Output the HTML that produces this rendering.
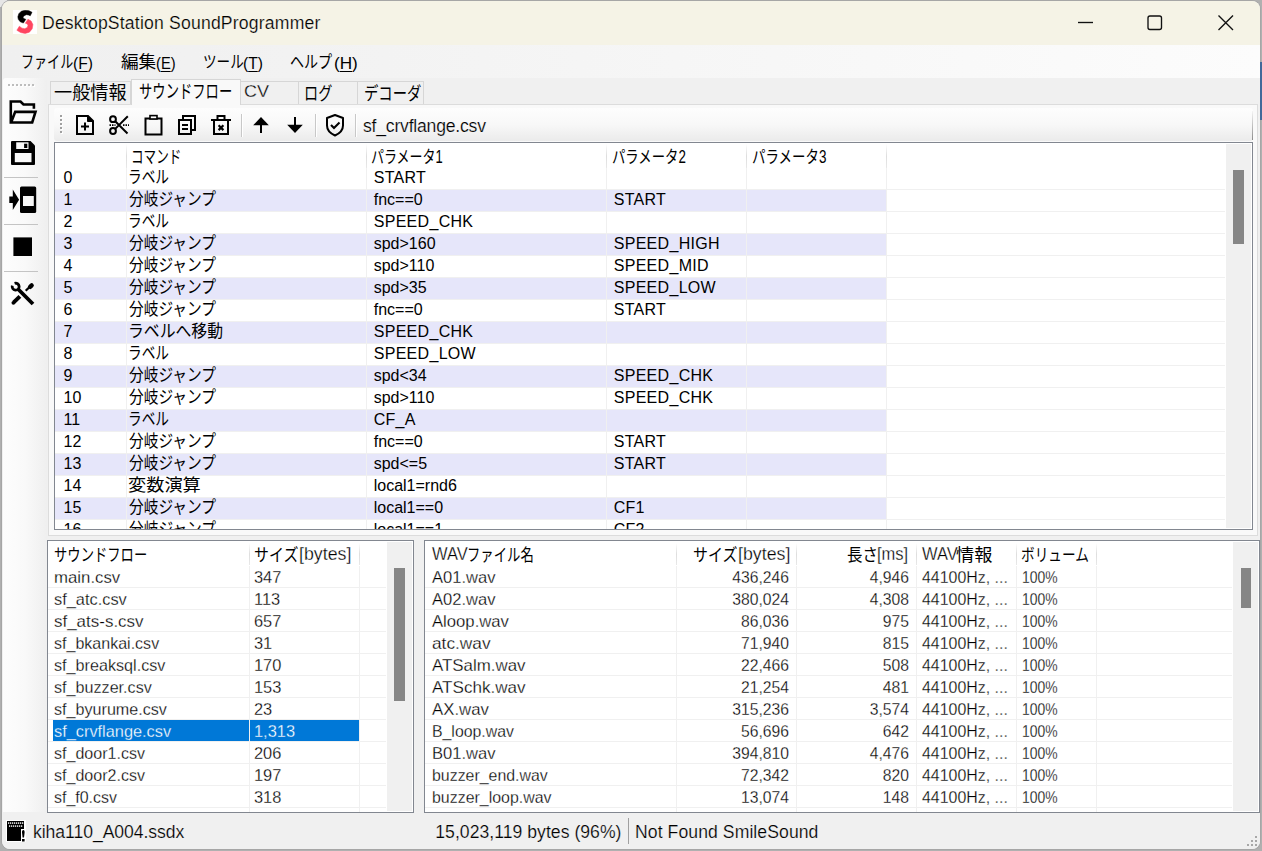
<!DOCTYPE html><html lang="ja"><head><meta charset="utf-8"><title>DesktopStation SoundProgrammer</title><style>
html,body{margin:0;padding:0}
body{width:1262px;height:851px;overflow:hidden;background:#b0b0b0;position:relative;font-family:"Liberation Sans",sans-serif;color:#000}
div,span.t,svg.a{position:absolute}
.clip{overflow:hidden}
.t{white-space:nowrap;display:block}
.jp{font-family:"Liberation Sans","Noto Sans CJK JP",sans-serif;font-size:17.5px;line-height:18px;transform-origin:0 0}
.jp.h{line-height:20px}
.jp.m{font-size:17px;line-height:20px}
.jp.tb{font-size:18.5px;line-height:20px}
.ttl{-webkit-text-stroke:0.2px #f5f3e6;font-size:17.6px;line-height:24px;letter-spacing:0.189px}
.mn{font-size:16.5px;line-height:20px;transform-origin:0 0}
.mn u{text-decoration:underline;text-decoration-thickness:1px;text-underline-offset:2px}
.seg{-webkit-text-stroke:0.2px #f4f4f4;font-size:17.6px;line-height:22px;letter-spacing:-0.212px}
.seg2{-webkit-text-stroke:0.2px #f0f0f0;font-size:17.6px;line-height:22px}
.g{font-size:16px;line-height:18px}
.u{letter-spacing:0.3px}
.l{font-size:16px;line-height:22px;transform:scale(1.025,1.08);transform-origin:0 16.5px;-webkit-text-stroke:0.25px #fff;margin-top:0.8px}
.l.r{transform:scale(0.98,1.08);transform-origin:100% 16.5px}
.l.w{transform:scale(1.03,1.13)}
.sel{-webkit-text-stroke-color:#0078d7}
.ls{font-size:17px;line-height:18px;transform:scaleX(1.06);transform-origin:0 0;-webkit-text-stroke:0.3px #f0f0f0}
.r{text-align:right}
</style></head><body><div style="left:0px;top:0px;width:7px;height:7px;background:#e6e6e6"></div>
<div style="left:2px;top:1px;width:1258px;height:848px;background:#f0f0f0;border-radius:8px;box-shadow:0 0 0 1px #a6a6a6;"></div>
<div style="left:2px;top:1px;width:1258px;height:44px;background:#f5f3e6;border-radius:8px 8px 0 0;"></div>
<svg class="a" style="left:13px;top:10px" width="24" height="24" viewBox="0 0 24 24"><rect width="24" height="24" fill="#fff"/><polygon points="19.03,2.29 17.27,5.81 15.33,4.93 13.21,4.68 10.57,6.16 10.11,7.57 11.10,8.63 12.86,9.34 10.39,13.04 7.22,11.80 5.28,9.34 4.83,6.87 5.81,3.70 8.28,1.23 12.16,0.17 16.03,0.70" fill="#000" stroke="#000" stroke-width="0.5" stroke-linejoin="round"/><polygon points="14.98,9.16 18.15,11.10 19.91,14.62 19.21,18.85 16.39,22.20 12.16,23.44 7.57,22.56 3.87,20.26 6.34,16.21 8.98,18.15 11.80,18.68 14.27,17.44 14.98,15.33 14.27,13.92 12.33,13.21" fill="#ff4560" stroke="#ff4560" stroke-width="0.5" stroke-linejoin="round"/></svg>
<span class="t ttl" style="left:42px;top:11px;">DesktopStation SoundProgrammer</span>
<svg class="a" style="left:1070px;top:8px" width="180" height="30" viewBox="0 0 180 30" fill="none" stroke="#111" stroke-width="1.35"><path d="M8 14.5h15"/><rect x="78" y="8" width="13.5" height="13.5" rx="2"/><path d="M148.5 7.5l14.5 14.5M163 7.5l-14.5 14.5"/></svg>
<div style="left:2px;top:45px;width:1258px;height:33px;background:linear-gradient(to right,#f0f0f0,#f1f1f1 15%,#fcfcfc 100%);"></div>
<span class="t jp m" style="left:20.9px;top:52.8px;transform:scaleX(.768)">ファイル</span>
<span class="t mn" style="left:73.2px;top:53px;transform:scaleX(.946)">(<u>F</u>)</span>
<span class="t jp m" style="left:120.6px;top:52.8px;transform:scaleX(1.036)">編集</span>
<span class="t mn" style="left:156.3px;top:53px;transform:scaleX(.89)">(<u>E</u>)</span>
<span class="t jp m" style="left:202.6px;top:52.8px;transform:scaleX(.8)">ツール</span>
<span class="t mn" style="left:243.3px;top:53px;transform:scaleX(.946)">(<u>T</u>)</span>
<span class="t jp m" style="left:290.3px;top:52.8px;transform:scaleX(.827)">ヘルプ</span>
<span class="t mn" style="left:333.5px;top:53px;transform:scaleX(1.04)">(<u>H</u>)</span>
<div style="left:3px;top:78px;width:44px;height:734px;background:linear-gradient(to right,#fdfdfd,#f9f9f9 50%,#efefef);border-radius:3px 3px 0 0;"></div>
<svg class="a" style="left:3px;top:78px" width="44" height="240" viewBox="0 0 44 240"><rect x="6" y="7" width="2" height="2" fill="#fff"/><rect x="5" y="6" width="2" height="2" fill="#bdbdbd"/><rect x="10" y="7" width="2" height="2" fill="#fff"/><rect x="9" y="6" width="2" height="2" fill="#bdbdbd"/><rect x="14" y="7" width="2" height="2" fill="#fff"/><rect x="13" y="6" width="2" height="2" fill="#bdbdbd"/><rect x="18" y="7" width="2" height="2" fill="#fff"/><rect x="17" y="6" width="2" height="2" fill="#bdbdbd"/><rect x="22" y="7" width="2" height="2" fill="#fff"/><rect x="21" y="6" width="2" height="2" fill="#bdbdbd"/><rect x="26" y="7" width="2" height="2" fill="#fff"/><rect x="25" y="6" width="2" height="2" fill="#bdbdbd"/><rect x="30" y="7" width="2" height="2" fill="#fff"/><rect x="29" y="6" width="2" height="2" fill="#bdbdbd"/><path d="M7.800 23.5h9.7l3 3h10.4v4.300M7.800 22.2v23.600M6.500 44.5h22.700l3.300-10.600h-20.300l-4.100 10.600" fill="none" stroke="#000" stroke-width="2.6" stroke-linejoin="miter"/><path d="M9 63h18.5l4.500 4.500v18.5a1 1 0 0 1-1 1h-22a1 1 0 0 1-1-1v-22a1 1 0 0 1 1-1z" fill="#000"/><rect x="13.2" y="64.3" width="12.3" height="6.7" fill="#f9f9f9"/><rect x="21.1" y="65.7" width="3.2" height="4.3" fill="#000"/><rect x="11.8" y="75" width="16.7" height="9.2" fill="#f9f9f9"/><rect x="1" y="99" width="34" height="1" fill="#c4c4c4"/><rect x="1" y="146" width="34" height="1" fill="#c4c4c4"/><rect x="1" y="193" width="34" height="1" fill="#c4c4c4"/><rect x="17" y="108.6" width="16.2" height="26.4" rx="1.5" fill="#000"/><rect x="20" y="118" width="10.8" height="10" fill="#f6f6f6"/><path d="M6.300 118.5h3.500v-7l6.300 10.200-6.300 10.200v-7h-3.500z" fill="#000"/><rect x="10.4" y="159.4" width="18.6" height="18.6" fill="#000"/><path d="M15 211L30 226" stroke="#000" stroke-width="3.8" fill="none"/><path d="M11.6 205.3A3.5 3.5 0 1 1 9.3 207.6" stroke="#000" stroke-width="2.8" fill="none"/><path d="M22.7 212.8L26.3 209.2" stroke="#000" stroke-width="2.3" fill="none"/><path d="M27.1 208.9L28.7 207.4" stroke="#000" stroke-width="4.3" stroke-linecap="round" fill="none"/><path d="M16.9 218.4L10.7 224.4" stroke="#000" stroke-width="4" fill="none"/><circle cx="10.4" cy="224.8" r="1.9" fill="#000"/></svg>
<div style="left:48px;top:104px;width:1210px;height:432px;background:#f9f9f9;border:1px solid #dcdcdc;box-sizing:border-box;"></div>
<div style="left:50px;top:81px;width:81px;height:23px;background:#f0f0f0;border:1px solid #d6d6d6;border-bottom:none;box-sizing:border-box;"></div>
<div style="left:240px;top:81px;width:59px;height:23px;background:#f0f0f0;border:1px solid #d6d6d6;border-bottom:none;box-sizing:border-box;"></div>
<div style="left:298px;top:81px;width:60px;height:23px;background:#f0f0f0;border:1px solid #d6d6d6;border-bottom:none;box-sizing:border-box;"></div>
<div style="left:357px;top:81px;width:67px;height:23px;background:#f0f0f0;border:1px solid #d6d6d6;border-bottom:none;box-sizing:border-box;"></div>
<div style="left:131px;top:79px;width:110px;height:26px;background:#f9f9f9;border:1px solid #d6d6d6;border-bottom:none;box-sizing:border-box;"></div>
<span class="t jp tb" style="left:54px;top:83.4px;transform:scaleX(.983)">一般情報</span>
<span class="t jp tb" style="left:138.7px;top:82.4px;transform:scaleX(.72)">サウンドフロー</span>
<span class="t jp tb" style="left:304.3px;top:83.5px;transform:scaleX(.765)">ログ</span>
<span class="t jp tb" style="left:364px;top:83.7px;transform:scaleX(.775)">デコーダ</span>
<span class="t ls" style="left:243.7px;top:83.3px;">CV</span>
<div style="left:54px;top:108px;width:1199px;height:33px;background:linear-gradient(#fdfdfd,#f8f8f8 50%,#ebebeb);border-radius:3px;"></div>
<div style="left:1252px;top:111px;width:1px;height:29px;background:linear-gradient(#f4f4f4,#8c8c8c)"></div>
<div style="left:1260px;top:62px;width:2px;height:58px;background:#41699a"></div>
<svg class="a" style="left:54px;top:108px" width="320" height="33" viewBox="54 108 320 33"><rect x="61" y="116" width="2" height="2" fill="#fff"/><rect x="60" y="115" width="2" height="2" fill="#a0a0a0"/><rect x="61" y="120" width="2" height="2" fill="#fff"/><rect x="60" y="119" width="2" height="2" fill="#a0a0a0"/><rect x="61" y="124" width="2" height="2" fill="#fff"/><rect x="60" y="123" width="2" height="2" fill="#a0a0a0"/><rect x="61" y="128" width="2" height="2" fill="#fff"/><rect x="60" y="127" width="2" height="2" fill="#a0a0a0"/><rect x="61" y="132" width="2" height="2" fill="#fff"/><rect x="60" y="131" width="2" height="2" fill="#a0a0a0"/><path d="M77 116h11l5 5v13h-16z" fill="none" stroke="#000" stroke-width="2" stroke-linejoin="miter"/><path d="M87.5 116.5l5 5h-5z" fill="#000" stroke="#000" stroke-width="1"/><path d="M81 126.5h8M85 122.5v8" fill="none" stroke="#000" stroke-width="2"/><circle cx="113" cy="119.2" r="2.9" fill="none" stroke="#000" stroke-width="2"/><circle cx="113" cy="131" r="2.9" fill="none" stroke="#000" stroke-width="2"/><path d="M115.2 121.3L127.5 133.5M115.2 128.9L127.8 116.2" fill="none" stroke="#000" stroke-width="2"/><path d="M109.5 125.1h6M123 125.1h6" stroke="#000" stroke-width="1.6" stroke-dasharray="1.5 1" fill="none"/><rect x="145.5" y="118.5" width="16" height="16" fill="none" stroke="#000" stroke-width="2"/><rect x="150" y="115.6" width="7" height="3.4" fill="#fff" stroke="#000" stroke-width="1.6"/><path d="M183 119v-3h12v14h-3" fill="none" stroke="#000" stroke-width="2"/><rect x="179" y="120" width="12" height="14" fill="none" stroke="#000" stroke-width="2"/><path d="M182 125h6M182 129h6" fill="none" stroke="#000" stroke-width="2"/><path d="M211 120h20M217.5 119.5v-3.500h7v3.500M214 121v13h14v-13" fill="none" stroke="#000" stroke-width="2"/><path d="M218.6 125.300l4.800 4.800M223.4 125.300l-4.800 4.800" stroke="#000" stroke-width="2.2" fill="none"/><rect x="241" y="114" width="1" height="23" fill="#c8c8c8"/><rect x="242" y="114" width="1" height="23" fill="#fff"/><rect x="315" y="114" width="1" height="23" fill="#c8c8c8"/><rect x="316" y="114" width="1" height="23" fill="#fff"/><rect x="355" y="114" width="1" height="23" fill="#c8c8c8"/><rect x="356" y="114" width="1" height="23" fill="#fff"/><path d="M261 133v-13" fill="none" stroke="#000" stroke-width="2"/><path d="M253.2 125.3l7.800-8.300 7.800 8.300z" fill="#000"/><path d="M295 117v13" fill="none" stroke="#000" stroke-width="2"/><path d="M287.2 124.7l7.800 8.300 7.800-8.300z" fill="#000"/><path d="M335 115l8 3v7.500c0 5-3.500 8-8 10-4.500-2-8-5-8-10v-7.500z" fill="none" stroke="#000" stroke-width="2" stroke-linejoin="round"/><path d="M331 125l3 3 5.500-5.500" fill="none" stroke="#000" stroke-width="2.1"/></svg>
<span class="t seg" style="left:363px;top:114.5px;">sf_crvflange.csv</span>
<div style="left:54px;top:142px;width:1199px;height:388px;background:#fff;border:1px solid #828790;box-sizing:border-box;"></div>
<div class="clip" style="left:55px;top:143px;width:1197px;height:386px">
<div style="left:0px;top:46px;width:1170px;height:1px;background:#f0f0f0"></div>
<div style="left:0px;top:47px;width:832px;height:21px;background:#e6e6fa"></div>
<div style="left:0px;top:68px;width:1170px;height:1px;background:#f0f0f0"></div>
<div style="left:0px;top:90px;width:1170px;height:1px;background:#f0f0f0"></div>
<div style="left:0px;top:91px;width:832px;height:21px;background:#e6e6fa"></div>
<div style="left:0px;top:112px;width:1170px;height:1px;background:#f0f0f0"></div>
<div style="left:0px;top:134px;width:1170px;height:1px;background:#f0f0f0"></div>
<div style="left:0px;top:135px;width:832px;height:21px;background:#e6e6fa"></div>
<div style="left:0px;top:156px;width:1170px;height:1px;background:#f0f0f0"></div>
<div style="left:0px;top:178px;width:1170px;height:1px;background:#f0f0f0"></div>
<div style="left:0px;top:179px;width:832px;height:21px;background:#e6e6fa"></div>
<div style="left:0px;top:200px;width:1170px;height:1px;background:#f0f0f0"></div>
<div style="left:0px;top:222px;width:1170px;height:1px;background:#f0f0f0"></div>
<div style="left:0px;top:223px;width:832px;height:21px;background:#e6e6fa"></div>
<div style="left:0px;top:244px;width:1170px;height:1px;background:#f0f0f0"></div>
<div style="left:0px;top:266px;width:1170px;height:1px;background:#f0f0f0"></div>
<div style="left:0px;top:267px;width:832px;height:21px;background:#e6e6fa"></div>
<div style="left:0px;top:288px;width:1170px;height:1px;background:#f0f0f0"></div>
<div style="left:0px;top:310px;width:1170px;height:1px;background:#f0f0f0"></div>
<div style="left:0px;top:311px;width:832px;height:21px;background:#e6e6fa"></div>
<div style="left:0px;top:332px;width:1170px;height:1px;background:#f0f0f0"></div>
<div style="left:0px;top:354px;width:1170px;height:1px;background:#f0f0f0"></div>
<div style="left:0px;top:355px;width:832px;height:21px;background:#e6e6fa"></div>
<div style="left:0px;top:376px;width:1170px;height:1px;background:#f0f0f0"></div>
<div style="left:0px;top:398px;width:1170px;height:1px;background:#f0f0f0"></div>
<div style="left:71px;top:25px;width:1px;height:362px;background:#f0f0f0"></div>
<div style="left:71px;top:1px;width:1px;height:24px;background:linear-gradient(#fff,#dedede 50%,#e8e8e8)"></div>
<div style="left:311px;top:25px;width:1px;height:362px;background:#f0f0f0"></div>
<div style="left:311px;top:1px;width:1px;height:24px;background:linear-gradient(#fff,#dedede 50%,#e8e8e8)"></div>
<div style="left:551px;top:25px;width:1px;height:362px;background:#f0f0f0"></div>
<div style="left:551px;top:1px;width:1px;height:24px;background:linear-gradient(#fff,#dedede 50%,#e8e8e8)"></div>
<div style="left:691px;top:25px;width:1px;height:362px;background:#f0f0f0"></div>
<div style="left:691px;top:1px;width:1px;height:24px;background:linear-gradient(#fff,#dedede 50%,#e8e8e8)"></div>
<div style="left:831px;top:25px;width:1px;height:362px;background:#f0f0f0"></div>
<div style="left:831px;top:1px;width:1px;height:24px;background:linear-gradient(#fff,#dedede 50%,#e8e8e8)"></div>
<span class="t jp h" style="left:75.7px;top:3.8px;transform:scaleX(.72)">コマンド</span>
<span class="t jp h" style="left:316.3px;top:4px;transform:scaleX(.742)">パラメータ1</span>
<span class="t jp h" style="left:556.9px;top:4px;transform:scaleX(.764)">パラメータ2</span>
<span class="t jp h" style="left:696.7px;top:4px;transform:scaleX(.769)">パラメータ3</span>
<span class="t g" style="left:8.5px;top:25.5px">0</span>
<span class="t jp" style="left:73px;top:25px;transform:scaleX(.78)">ラベル</span>
<span class="t g u" style="left:318.7px;top:25.5px">START</span>
<span class="t g" style="left:8.5px;top:47.5px">1</span>
<span class="t jp" style="left:73.9px;top:47px;transform:scaleX(.84)">分岐ジャンプ</span>
<span class="t g" style="left:318.7px;top:47.5px">fnc==0</span>
<span class="t g u" style="left:558.7px;top:47.5px">START</span>
<span class="t g" style="left:8.5px;top:69.5px">2</span>
<span class="t jp" style="left:73px;top:69px;transform:scaleX(.78)">ラベル</span>
<span class="t g u" style="left:318.7px;top:69.5px">SPEED_CHK</span>
<span class="t g" style="left:8.5px;top:91.5px">3</span>
<span class="t jp" style="left:73.9px;top:91px;transform:scaleX(.84)">分岐ジャンプ</span>
<span class="t g" style="left:318.7px;top:91.5px">spd&gt;160</span>
<span class="t g u" style="left:558.7px;top:91.5px">SPEED_HIGH</span>
<span class="t g" style="left:8.5px;top:113.5px">4</span>
<span class="t jp" style="left:73.9px;top:113px;transform:scaleX(.84)">分岐ジャンプ</span>
<span class="t g" style="left:318.7px;top:113.5px">spd&gt;110</span>
<span class="t g u" style="left:558.7px;top:113.5px">SPEED_MID</span>
<span class="t g" style="left:8.5px;top:135.5px">5</span>
<span class="t jp" style="left:73.9px;top:135px;transform:scaleX(.84)">分岐ジャンプ</span>
<span class="t g" style="left:318.7px;top:135.5px">spd&gt;35</span>
<span class="t g u" style="left:558.7px;top:135.5px">SPEED_LOW</span>
<span class="t g" style="left:8.5px;top:157.5px">6</span>
<span class="t jp" style="left:73.9px;top:157px;transform:scaleX(.84)">分岐ジャンプ</span>
<span class="t g" style="left:318.7px;top:157.5px">fnc==0</span>
<span class="t g u" style="left:558.7px;top:157.5px">START</span>
<span class="t g" style="left:8.5px;top:179.5px">7</span>
<span class="t jp" style="left:72.5px;top:179px;transform:scaleX(.905)">ラベルへ移動</span>
<span class="t g u" style="left:318.7px;top:179.5px">SPEED_CHK</span>
<span class="t g" style="left:8.5px;top:201.5px">8</span>
<span class="t jp" style="left:73px;top:201px;transform:scaleX(.78)">ラベル</span>
<span class="t g u" style="left:318.7px;top:201.5px">SPEED_LOW</span>
<span class="t g" style="left:8.5px;top:223.5px">9</span>
<span class="t jp" style="left:73.9px;top:223px;transform:scaleX(.84)">分岐ジャンプ</span>
<span class="t g" style="left:318.7px;top:223.5px">spd&lt;34</span>
<span class="t g u" style="left:558.7px;top:223.5px">SPEED_CHK</span>
<span class="t g" style="left:8.5px;top:245.5px">10</span>
<span class="t jp" style="left:73.9px;top:245px;transform:scaleX(.84)">分岐ジャンプ</span>
<span class="t g" style="left:318.7px;top:245.5px">spd&gt;110</span>
<span class="t g u" style="left:558.7px;top:245.5px">SPEED_CHK</span>
<span class="t g" style="left:8.5px;top:267.5px">11</span>
<span class="t jp" style="left:73px;top:267px;transform:scaleX(.78)">ラベル</span>
<span class="t g u" style="left:318.7px;top:267.5px">CF_A</span>
<span class="t g" style="left:8.5px;top:289.5px">12</span>
<span class="t jp" style="left:73.9px;top:289px;transform:scaleX(.84)">分岐ジャンプ</span>
<span class="t g" style="left:318.7px;top:289.5px">fnc==0</span>
<span class="t g u" style="left:558.7px;top:289.5px">START</span>
<span class="t g" style="left:8.5px;top:311.5px">13</span>
<span class="t jp" style="left:73.9px;top:311px;transform:scaleX(.84)">分岐ジャンプ</span>
<span class="t g" style="left:318.7px;top:311.5px">spd&lt;=5</span>
<span class="t g u" style="left:558.7px;top:311.5px">START</span>
<span class="t g" style="left:8.5px;top:333.5px">14</span>
<span class="t jp" style="left:73px;top:333px;transform:scaleX(1.04)">変数演算</span>
<span class="t g" style="left:318.7px;top:333.5px">local1=rnd6</span>
<span class="t g" style="left:8.5px;top:355.5px">15</span>
<span class="t jp" style="left:73.9px;top:355px;transform:scaleX(.84)">分岐ジャンプ</span>
<span class="t g" style="left:318.7px;top:355.5px">local1==0</span>
<span class="t g u" style="left:558.7px;top:355.5px">CF1</span>
<span class="t g" style="left:8.5px;top:377.5px">16</span>
<span class="t jp" style="left:73.9px;top:377px;transform:scaleX(.84)">分岐ジャンプ</span>
<span class="t g" style="left:318.7px;top:377.5px">local1==1</span>
<span class="t g u" style="left:558.7px;top:377.5px">CF2</span>
</div>
<div style="left:1226px;top:144px;width:25px;height:384px;background:#f0f0f0"></div>
<div style="left:1233px;top:170px;width:11px;height:74px;background:#868686"></div>
<div style="left:47px;top:540px;width:367px;height:273px;background:#fff;border:1px solid #828790;box-sizing:border-box;"></div>
<div class="clip" style="left:48px;top:542px;width:365px;height:270px">
<div style="left:0px;top:45px;width:338px;height:1px;background:#f0f0f0"></div>
<div style="left:0px;top:67px;width:338px;height:1px;background:#f0f0f0"></div>
<div style="left:0px;top:89px;width:338px;height:1px;background:#f0f0f0"></div>
<div style="left:0px;top:111px;width:338px;height:1px;background:#f0f0f0"></div>
<div style="left:0px;top:133px;width:338px;height:1px;background:#f0f0f0"></div>
<div style="left:0px;top:155px;width:338px;height:1px;background:#f0f0f0"></div>
<div style="left:0px;top:177px;width:338px;height:1px;background:#f0f0f0"></div>
<div style="left:5px;top:178px;width:306px;height:21px;background:#0078d7"></div>
<div style="left:0px;top:199px;width:338px;height:1px;background:#f0f0f0"></div>
<div style="left:0px;top:221px;width:338px;height:1px;background:#f0f0f0"></div>
<div style="left:0px;top:243px;width:338px;height:1px;background:#f0f0f0"></div>
<div style="left:0px;top:265px;width:338px;height:1px;background:#f0f0f0"></div>
<div style="left:0px;top:287px;width:338px;height:1px;background:#f0f0f0"></div>
<div style="left:201px;top:24px;width:1px;height:250px;background:#f0f0f0"></div>
<div style="left:201px;top:1px;width:1px;height:22px;background:linear-gradient(#fff,#dedede 50%,#e8e8e8)"></div>
<div style="left:311px;top:24px;width:1px;height:250px;background:#f0f0f0"></div>
<div style="left:311px;top:1px;width:1px;height:22px;background:linear-gradient(#fff,#dedede 50%,#e8e8e8)"></div>
<span class="t jp h" style="left:5.9px;top:3.2px;transform:scaleX(.761)">サウンドフロー</span>
<span class="t jp h" style="left:205.9px;top:3.3px;transform:scaleX(.853)">サイズ</span>
<span class="t l" style="left:251.2px;top:1.3px;transform:scale(1.11,1.13)">[bytes]</span>
<span class="t l" style="left:6.2px;top:24px;transform:scale(1.049,1.08)">main.csv</span>
<span class="t l" style="left:206px;top:24px">347</span>
<span class="t l" style="left:6.2px;top:46px;transform:scale(1.023,1.08)">sf_atc.csv</span>
<span class="t l" style="left:206px;top:46px">113</span>
<span class="t l" style="left:6.2px;top:68px;transform:scale(1.060,1.08)">sf_ats-s.csv</span>
<span class="t l" style="left:206px;top:68px">657</span>
<span class="t l" style="left:6.2px;top:90px;transform:scale(1.002,1.08)">sf_bkankai.csv</span>
<span class="t l" style="left:206px;top:90px">31</span>
<span class="t l" style="left:6.2px;top:112px;transform:scale(1.010,1.08)">sf_breaksql.csv</span>
<span class="t l" style="left:206px;top:112px">170</span>
<span class="t l" style="left:6.2px;top:134px;transform:scale(1.009,1.08)">sf_buzzer.csv</span>
<span class="t l" style="left:206px;top:134px">153</span>
<span class="t l" style="left:6.2px;top:156px;transform:scale(1.008,1.08)">sf_byurume.csv</span>
<span class="t l" style="left:206px;top:156px">23</span>
<span class="t l" style="left:6.2px;top:178px;color:#fff;-webkit-text-stroke-color:#0078d7;transform:scale(1.021,1.08)">sf_crvflange.csv</span>
<span class="t l" style="left:206px;top:178px;color:#fff;-webkit-text-stroke-color:#0078d7">1,313</span>
<span class="t l" style="left:6.2px;top:200px;transform:scale(1.003,1.08)">sf_door1.csv</span>
<span class="t l" style="left:206px;top:200px">206</span>
<span class="t l" style="left:6.2px;top:222px;transform:scale(1.003,1.08)">sf_door2.csv</span>
<span class="t l" style="left:206px;top:222px">197</span>
<span class="t l" style="left:6.2px;top:244px;transform:scale(0.996,1.08)">sf_f0.csv</span>
<span class="t l" style="left:206px;top:244px">318</span>
<span class="t l" style="left:206px;top:266px"></span>
</div>
<div style="left:387px;top:542px;width:25px;height:269px;background:#f0f0f0"></div>
<div style="left:394px;top:568px;width:11px;height:133px;background:#868686"></div>
<div style="left:424px;top:540px;width:836px;height:273px;background:#fff;border:1px solid #828790;box-sizing:border-box;"></div>
<div class="clip" style="left:425px;top:542px;width:834px;height:270px">
<div style="left:0px;top:45px;width:807px;height:1px;background:#f0f0f0"></div>
<div style="left:0px;top:67px;width:807px;height:1px;background:#f0f0f0"></div>
<div style="left:0px;top:89px;width:807px;height:1px;background:#f0f0f0"></div>
<div style="left:0px;top:111px;width:807px;height:1px;background:#f0f0f0"></div>
<div style="left:0px;top:133px;width:807px;height:1px;background:#f0f0f0"></div>
<div style="left:0px;top:155px;width:807px;height:1px;background:#f0f0f0"></div>
<div style="left:0px;top:177px;width:807px;height:1px;background:#f0f0f0"></div>
<div style="left:0px;top:199px;width:807px;height:1px;background:#f0f0f0"></div>
<div style="left:0px;top:221px;width:807px;height:1px;background:#f0f0f0"></div>
<div style="left:0px;top:243px;width:807px;height:1px;background:#f0f0f0"></div>
<div style="left:0px;top:265px;width:807px;height:1px;background:#f0f0f0"></div>
<div style="left:0px;top:287px;width:807px;height:1px;background:#f0f0f0"></div>
<div style="left:251px;top:24px;width:1px;height:250px;background:#f0f0f0"></div>
<div style="left:251px;top:1px;width:1px;height:22px;background:linear-gradient(#fff,#dedede 50%,#e8e8e8)"></div>
<div style="left:371px;top:24px;width:1px;height:250px;background:#f0f0f0"></div>
<div style="left:371px;top:1px;width:1px;height:22px;background:linear-gradient(#fff,#dedede 50%,#e8e8e8)"></div>
<div style="left:491px;top:24px;width:1px;height:250px;background:#f0f0f0"></div>
<div style="left:491px;top:1px;width:1px;height:22px;background:linear-gradient(#fff,#dedede 50%,#e8e8e8)"></div>
<div style="left:591px;top:24px;width:1px;height:250px;background:#f0f0f0"></div>
<div style="left:591px;top:1px;width:1px;height:22px;background:linear-gradient(#fff,#dedede 50%,#e8e8e8)"></div>
<div style="left:671px;top:24px;width:1px;height:250px;background:#f0f0f0"></div>
<div style="left:671px;top:1px;width:1px;height:22px;background:linear-gradient(#fff,#dedede 50%,#e8e8e8)"></div>
<span class="t l w" style="left:7px;top:1.3px">WAV</span>
<span class="t jp h" style="left:41.9px;top:3px;transform:scaleX(.763)">ファイル名</span>
<span class="t jp h" style="left:267.9px;top:3.3px;transform:scaleX(.853)">サイズ</span>
<span class="t l" style="left:313.2px;top:1.3px;transform:scale(1.11,1.13)">[bytes]</span>
<span class="t jp h" style="left:421.6px;top:2.9px;transform:scaleX(.884)">長さ</span>
<span class="t l" style="left:452px;top:1.3px;transform:scale(1.03,1.13)">[ms]</span>
<span class="t l w" style="left:497px;top:1.3px">WAV</span>
<span class="t jp h" style="left:531.3px;top:2.9px;transform:scaleX(1.04)">情報</span>
<span class="t jp h" style="left:596.2px;top:3.2px;transform:scaleX(.78)">ボリューム</span>
<span class="t l" style="left:6.8px;top:24px;transform:scale(1.035,1.08)">A01.wav</span>
<span class="t l r" style="left:253.5px;top:24px;width:110px">436,246</span>
<span class="t l r" style="left:374px;top:24px;width:110px">4,946</span>
<span class="t l" style="left:496.5px;top:24px;transform:scale(0.995,1.08)">44100Hz, ...</span>
<span class="t l" style="left:596.7px;top:24px;transform:scale(0.87,1.08)">100%</span>
<span class="t l" style="left:6.8px;top:46px;transform:scale(1.035,1.08)">A02.wav</span>
<span class="t l r" style="left:253.5px;top:46px;width:110px">380,024</span>
<span class="t l r" style="left:374px;top:46px;width:110px">4,308</span>
<span class="t l" style="left:496.5px;top:46px;transform:scale(0.995,1.08)">44100Hz, ...</span>
<span class="t l" style="left:596.7px;top:46px;transform:scale(0.87,1.08)">100%</span>
<span class="t l" style="left:6.8px;top:68px;transform:scale(1.042,1.08)">Aloop.wav</span>
<span class="t l r" style="left:253.5px;top:68px;width:110px">86,036</span>
<span class="t l r" style="left:374px;top:68px;width:110px">975</span>
<span class="t l" style="left:496.5px;top:68px;transform:scale(0.995,1.08)">44100Hz, ...</span>
<span class="t l" style="left:596.7px;top:68px;transform:scale(0.87,1.08)">100%</span>
<span class="t l" style="left:6.8px;top:90px;transform:scale(1.080,1.08)">atc.wav</span>
<span class="t l r" style="left:253.5px;top:90px;width:110px">71,940</span>
<span class="t l r" style="left:374px;top:90px;width:110px">815</span>
<span class="t l" style="left:496.5px;top:90px;transform:scale(0.995,1.08)">44100Hz, ...</span>
<span class="t l" style="left:596.7px;top:90px;transform:scale(0.87,1.08)">100%</span>
<span class="t l" style="left:6.8px;top:112px;transform:scale(1.055,1.08)">ATSalm.wav</span>
<span class="t l r" style="left:253.5px;top:112px;width:110px">22,466</span>
<span class="t l r" style="left:374px;top:112px;width:110px">508</span>
<span class="t l" style="left:496.5px;top:112px;transform:scale(0.995,1.08)">44100Hz, ...</span>
<span class="t l" style="left:596.7px;top:112px;transform:scale(0.87,1.08)">100%</span>
<span class="t l" style="left:6.8px;top:134px;transform:scale(1.066,1.08)">ATSchk.wav</span>
<span class="t l r" style="left:253.5px;top:134px;width:110px">21,254</span>
<span class="t l r" style="left:374px;top:134px;width:110px">481</span>
<span class="t l" style="left:496.5px;top:134px;transform:scale(0.995,1.08)">44100Hz, ...</span>
<span class="t l" style="left:596.7px;top:134px;transform:scale(0.87,1.08)">100%</span>
<span class="t l" style="left:6.8px;top:156px;transform:scale(1.049,1.08)">AX.wav</span>
<span class="t l r" style="left:253.5px;top:156px;width:110px">315,236</span>
<span class="t l r" style="left:374px;top:156px;width:110px">3,574</span>
<span class="t l" style="left:496.5px;top:156px;transform:scale(0.995,1.08)">44100Hz, ...</span>
<span class="t l" style="left:596.7px;top:156px;transform:scale(0.87,1.08)">100%</span>
<span class="t l" style="left:6.8px;top:178px;transform:scale(0.990,1.08)">B_loop.wav</span>
<span class="t l r" style="left:253.5px;top:178px;width:110px">56,696</span>
<span class="t l r" style="left:374px;top:178px;width:110px">642</span>
<span class="t l" style="left:496.5px;top:178px;transform:scale(0.995,1.08)">44100Hz, ...</span>
<span class="t l" style="left:596.7px;top:178px;transform:scale(0.87,1.08)">100%</span>
<span class="t l" style="left:6.8px;top:200px;transform:scale(1.036,1.08)">B01.wav</span>
<span class="t l r" style="left:253.5px;top:200px;width:110px">394,810</span>
<span class="t l r" style="left:374px;top:200px;width:110px">4,476</span>
<span class="t l" style="left:496.5px;top:200px;transform:scale(0.995,1.08)">44100Hz, ...</span>
<span class="t l" style="left:596.7px;top:200px;transform:scale(0.87,1.08)">100%</span>
<span class="t l" style="left:6.8px;top:222px;transform:scale(0.994,1.08)">buzzer_end.wav</span>
<span class="t l r" style="left:253.5px;top:222px;width:110px">72,342</span>
<span class="t l r" style="left:374px;top:222px;width:110px">820</span>
<span class="t l" style="left:496.5px;top:222px;transform:scale(0.995,1.08)">44100Hz, ...</span>
<span class="t l" style="left:596.7px;top:222px;transform:scale(0.87,1.08)">100%</span>
<span class="t l" style="left:6.8px;top:244px;transform:scale(0.995,1.08)">buzzer_loop.wav</span>
<span class="t l r" style="left:253.5px;top:244px;width:110px">13,074</span>
<span class="t l r" style="left:374px;top:244px;width:110px">148</span>
<span class="t l" style="left:496.5px;top:244px;transform:scale(0.995,1.08)">44100Hz, ...</span>
<span class="t l" style="left:596.7px;top:244px;transform:scale(0.87,1.08)">100%</span>
</div>
<div style="left:1233px;top:542px;width:25px;height:269px;background:#f0f0f0"></div>
<div style="left:1241px;top:568px;width:10px;height:40px;background:#868686"></div>
<div style="left:2px;top:813px;width:1258px;height:36px;background:#f0f0f0;border-radius:0 0 8px 8px;"></div>
<svg class="a" style="left:6px;top:820px" width="20" height="23" viewBox="0 0 20 23"><rect x="0" y="0" width="20" height="22" fill="#fff"/><rect x="1" y="1" width="17" height="8" fill="#000"/><rect x="1" y="8" width="14" height="13" fill="#000"/><rect x="2.2" y="2.2" width="1" height="1.8" fill="#fff"/><rect x="4.2" y="2.2" width="1" height="1.8" fill="#fff"/><rect x="6.2" y="2.2" width="1" height="1.8" fill="#fff"/><rect x="8.2" y="2.2" width="1" height="1.8" fill="#fff"/><rect x="10.2" y="2.2" width="1" height="1.8" fill="#fff"/><rect x="12.2" y="2.2" width="1" height="1.8" fill="#fff"/><rect x="14.2" y="2.2" width="1" height="1.8" fill="#fff"/><rect x="16.2" y="2.2" width="1" height="1.8" fill="#fff"/><rect x="3.2" y="5.200" width="1" height="1.8" fill="#fff"/><rect x="5.2" y="5.200" width="1" height="1.8" fill="#fff"/><rect x="7.2" y="5.200" width="1" height="1.8" fill="#fff"/><rect x="9.2" y="5.200" width="1" height="1.8" fill="#fff"/><rect x="11.2" y="5.200" width="1" height="1.8" fill="#fff"/><rect x="13.2" y="5.200" width="1" height="1.8" fill="#fff"/><rect x="15.2" y="5.200" width="1" height="1.8" fill="#fff"/><rect x="15" y="9" width="5" height="13" fill="#fff"/><path d="M17.3 10c1 0 1.400 1 1.300 2.500l-.6 5h-1.400l-.6-5c-.1-1.500.3-2.500 1.300-2.500z" fill="#000"/><rect x="16" y="19" width="2.600" height="2.500" fill="#000"/></svg>
<span class="t seg2" style="left:33px;top:821.2px;letter-spacing:-0.057px">kiha110_A004.ssdx</span>
<span class="t seg2" style="left:435.3px;top:821.2px;letter-spacing:0.031px">15,023,119 bytes (96%)</span>
<div style="left:628px;top:818px;width:1px;height:26px;background:#a0a0a0"></div>
<span class="t seg2" style="left:635px;top:821.2px;letter-spacing:0.079px">Not Found SmileSound</span>
<svg class="a" style="left:1247px;top:835px" width="12" height="12" viewBox="0 0 12 12" fill="#a8a8a8"><rect x="8" y="1" width="2" height="2"/><rect x="4" y="5" width="2" height="2"/><rect x="8" y="5" width="2" height="2"/><rect x="0" y="9" width="2" height="2"/><rect x="4" y="9" width="2" height="2"/><rect x="8" y="9" width="2" height="2"/></svg></body></html>
